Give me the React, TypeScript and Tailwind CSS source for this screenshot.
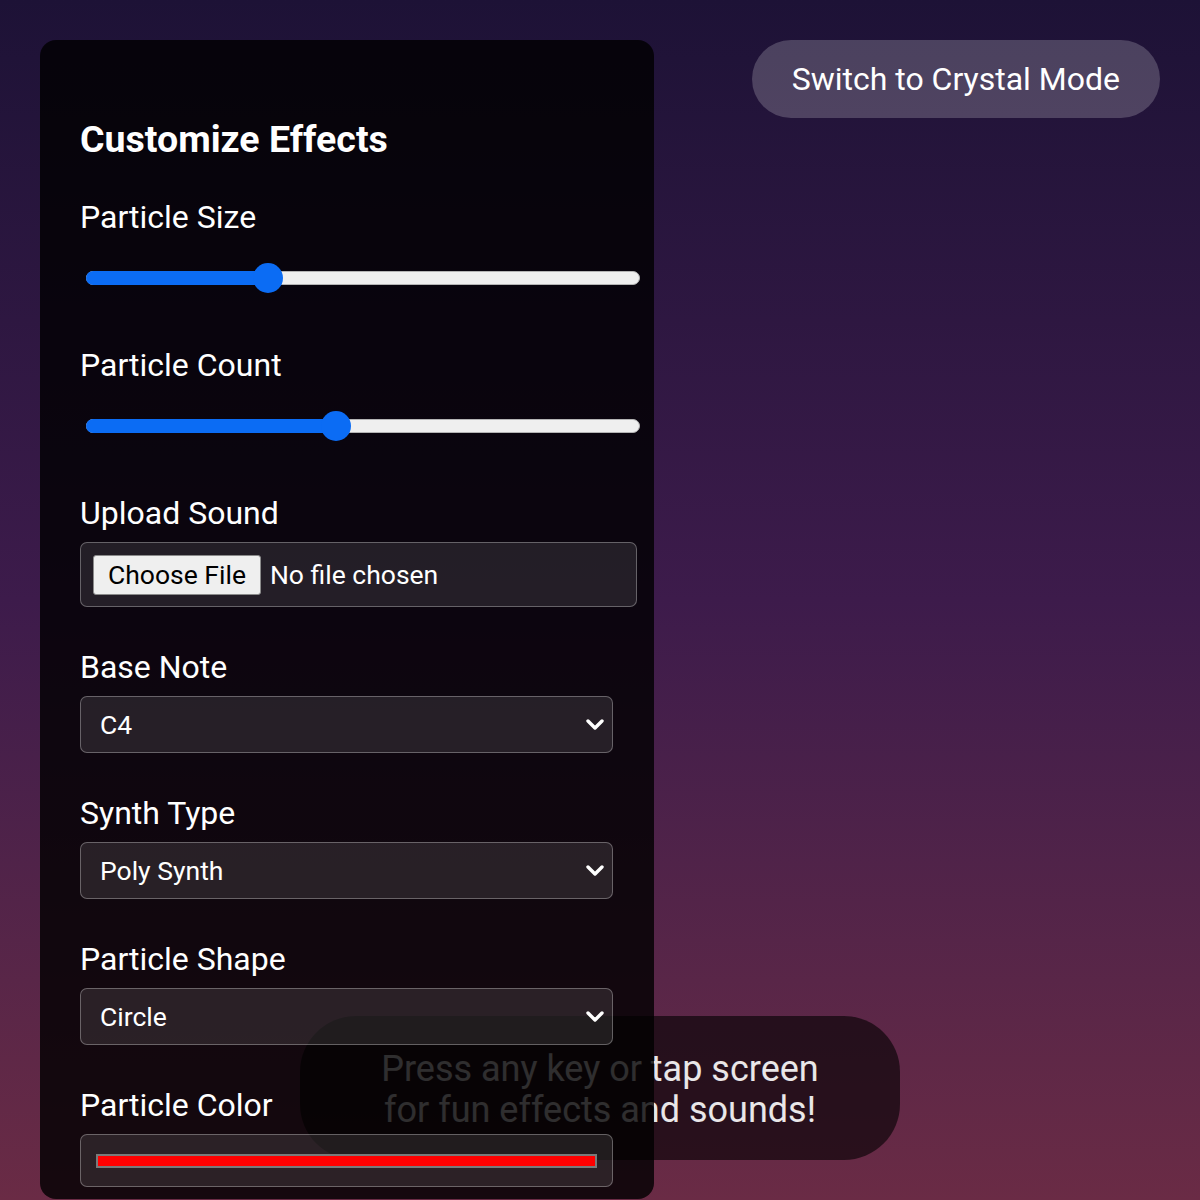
import React from "react";

function Slider({ pos }: { pos: number }) {
  // pos = thumb centre, px from the track's left end
  return (
    <div className="relative h-[30px] w-[554px] ml-[6px] flex items-center">
      <div className="h-[14px] w-full rounded-full bg-[#efefef] border border-[#b4b4b4]" />
      <div
        className="absolute left-0 h-[14px] rounded-full bg-[#0b6cf4]"
        style={{ width: pos }}
      />
      <div
        className="absolute top-0 h-[30px] w-[30px] rounded-full bg-[#0b6cf4]"
        style={{ left: pos - 15 }}
      />
    </div>
  );
}

function Chevron() {
  return (
    <svg width="18" height="12" viewBox="0 0 18 12" className="absolute right-[8px] top-1/2 -translate-y-1/2">
      <polyline points="2,2 9,9 16,2" fill="none" stroke="white" strokeWidth="3.4" strokeLinecap="round" strokeLinejoin="round" />
    </svg>
  );
}

function Select({ value }: { value: string }) {
  return (
    <div className="relative mt-[11px] h-[57px] w-[533px] rounded-[7px] border border-white/30 bg-white/10 flex items-center pl-[19px] text-[26.5px] text-white">
      {value}
      <Chevron />
    </div>
  );
}

function Label({ children, className = "" }: { children: React.ReactNode; className?: string }) {
  return <div className={"text-[32px] leading-[36px] text-white " + className}>{children}</div>;
}

export default function App() {
  return (
    <div
      className="relative h-[1200px] overflow-hidden bg-gradient-to-b from-[#1d1236] via-[#3d1b4b] to-[#6a2b45] flex justify-between p-10"
      style={{ fontFamily: "Roboto, 'Noto Sans', sans-serif" }}
    >
      {/* toast sits under the panel */}
      <div className="absolute left-[300px] top-[1016px] z-0 w-[600px] h-[144px] rounded-[56px] bg-black/60 flex flex-col items-center justify-center pt-[4px] text-[36px] leading-[41px] text-white/90">
        <div>Press any key or tap screen</div>
        <div>for fun effects and sounds!</div>
      </div>

      <div className="relative z-10 w-[614px] h-[1159px] shrink-0 overflow-hidden rounded-[16px] bg-black/80 pl-10 pt-[77px]">
        <h2 className="text-[37.5px] leading-[44px] font-bold text-white">Customize Effects</h2>

        <Label className="mt-[38px]">Particle Size</Label>
        <div className="mt-[28px]">
          <Slider pos={182} />
        </div>

        <Label className="mt-[54px]">Particle Count</Label>
        <div className="mt-[28px]">
          <Slider pos={250} />
        </div>

        <Label className="mt-[54px]">Upload Sound</Label>
        <div className="mt-[11px] h-[65px] w-[557px] rounded-[7px] border border-white/30 bg-white/10 flex items-center pl-[12px] text-[26.5px]">
          <div className="h-[40px] px-[14px] flex items-center rounded-[3px] border border-[#8a8a8a] bg-[#efefef] text-black">
            Choose File
          </div>
          <span className="ml-[9px] text-white">No file chosen</span>
        </div>

        <Label className="mt-[42px]">Base Note</Label>
        <Select value="C4" />

        <Label className="mt-[42px]">Synth Type</Label>
        <Select value="Poly Synth" />

        <Label className="mt-[42px]">Particle Shape</Label>
        <Select value="Circle" />

        <Label className="mt-[42px]">Particle Color</Label>
        <div className="mt-[11px] h-[53px] w-[533px] rounded-[7px] border border-white/30 bg-white/10 px-[15px] pt-[19px]">
          <div className="h-[14px] w-full bg-[#ff0000] border-2 border-[#7a7a7a]" />
        </div>
      </div>

      <button className="relative z-10 h-[78px] px-[40px] rounded-full bg-white/20 text-[32px] text-white">
        Switch to Crystal Mode
      </button>
    </div>
  );
}
